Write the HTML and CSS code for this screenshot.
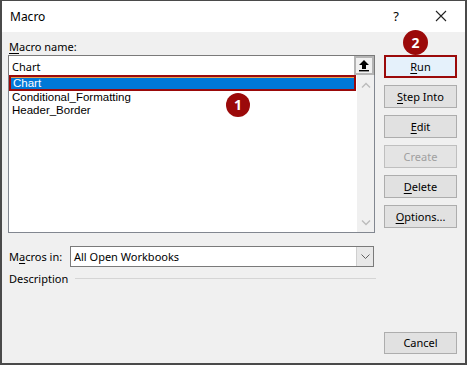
FILE: index.html
```html
<!DOCTYPE html>
<html>
<head>
<meta charset="utf-8">
<link rel="stylesheet" href="styles.css">
</head>
<body>
<div class="dialog">
  <div class="titlebar">
    <span class="title">Macro</span>
    <span class="help">?</span>
    <svg class="close" width="12" height="12" viewBox="0 0 12 12"><path d="M1 1L11 11M11 1L1 11" stroke="#222" stroke-width="1.1" fill="none"/></svg>
  </div>
  <div class="content">
    <div class="left">
      <div class="label"><u>M</u>acro name:</div>
      <div class="namebox">
        <span class="nametext">Chart</span>
        <span class="upbtn">
          <svg width="12" height="13" viewBox="0 0 12 13"><path d="M6 1L11 6H8V10H4V6H1Z" fill="#000"/><rect x="1" y="11" width="10" height="1.4" fill="#000"/></svg>
        </span>
      </div>
      <div class="list">
        <div class="items">
          <div class="item selected">Chart</div>
          <div class="item">Conditional_Formatting</div>
          <div class="item">Header_Border</div>
        </div>
        <div class="scrollbar">
          <svg width="10" height="6" viewBox="0 0 10 6"><path d="M1 5.5L5 1.5L9 5.5" stroke="#bcbcbc" stroke-width="1.4" fill="none"/></svg>
          <svg width="10" height="6" viewBox="0 0 10 6"><path d="M1 0.5L5 4.5L9 0.5" stroke="#bcbcbc" stroke-width="1.4" fill="none"/></svg>
        </div>
        <span class="badge b1">1</span>
      </div>
      <div class="inrow">
        <span class="inlabel">M<u>a</u>cros in:</span>
        <div class="select">
          <span class="seltext">All Open Workbooks</span>
          <span class="selbtn"><svg width="9" height="5" viewBox="0 0 9 5"><path d="M0.5 0.5L4.5 4.5L8.5 0.5" stroke="#606060" stroke-width="1" fill="none"/></svg></span>
        </div>
      </div>
      <div class="descrow">
        <span>Description</span>
        <span class="rule"></span>
      </div>
    </div>
    <div class="right">
      <div class="btn run"><span><u>R</u>un</span><span class="badge b2">2</span></div>
      <div class="btn"><span><u>S</u>tep Into</span></div>
      <div class="btn"><span><u>E</u>dit</span></div>
      <div class="btn disabled"><span>Create</span></div>
      <div class="btn"><span><u>D</u>elete</span></div>
      <div class="btn"><span><u>O</u>ptions...</span></div>
      <div class="btn cancel"><span>Cancel</span></div>
    </div>
  </div>
</div>
</body>
</html>
```

FILE: styles.css
```css
* { box-sizing: border-box; }
html, body { margin: 0; padding: 0; background: #f0f0f0; }
body {
  width: 467px;
  height: 365px;
  font-family: "Noto Sans", "Open Sans", sans-serif;
  font-size: 11px;
  color: #000;
}
u { text-decoration: underline; text-underline-offset: 2px; text-decoration-thickness: 1px; }
.dialog {
  width: 467px;
  height: 365px;
  border: 2px solid #4a4a4a;
  border-top-width: 1px;
  background: #f0f0f0;
  display: flex;
  flex-direction: column;
}
.titlebar {
  height: 31px;
  background: #fff;
  display: flex;
  align-items: center;
  padding: 0 0 0 8px;
  flex: none;
}
.title { font-size: 12px; flex: 1; padding-bottom: 1px; }
.help { font-size: 13px; margin-right: 36px; padding-bottom: 2px; }
.close { margin-right: 18px; margin-bottom: 1px; }
.content {
  flex: 1;
  display: flex;
  padding: 7px 0 9px 6px;
}
.left { width: 368px; display: flex; flex-direction: column; }
.label { height: 16px; line-height: 15px; padding-left: 1px; }
.namebox {
  height: 20px;
  border: 1px solid #7a7a7a;
  border-bottom: none;
  background: #fff;
  display: flex;
  align-items: center;
  margin-right: 1px;
}
.nametext { flex: 1; padding-left: 3px; padding-top: 1px; }
.upbtn {
  width: 20px;
  height: 19px;
  align-self: flex-start;
  border: 2px solid #b4b4b4;
  background: #f0f0f0;
  display: flex;
  align-items: center;
  justify-content: center;
}
.list {
  position: relative;
  height: 158px;
  border: 1px solid #828790;
  border-top: none;
  background: #fff;
  display: flex;
  margin-right: 1px;
}
.items { flex: 1; }
.item {
  height: 13px;
  line-height: 13px;
  padding-left: 3px;
  margin: 0 1px 0 0;
  font-family: "Liberation Sans", Arial, sans-serif;
  font-size: 11.5px;
}
.item.selected {
  height: 16px;
  line-height: 12px;
  background: #0078d7;
  color: #fff;
  border: 2px solid #9b0a0a;
  box-shadow: inset 0 1px 0 0 #e8a050;
  padding-left: 2px;
}
.scrollbar {
  width: 17px;
  background: #f0f0f0;
  display: flex;
  flex-direction: column;
  justify-content: space-between;
  align-items: center;
  padding: 7px 0 6px;
}
.badge {
  position: absolute;
  width: 24px;
  height: 24px;
  border-radius: 50%;
  background: #9b0a0a;
  color: #fff;
  font-weight: bold;
  font-size: 14px;
  line-height: 24px;
  text-align: center;
}
.b1 { left: 217px; top: 18px; }
.b2 { left: 17px; top: -27px; width: 25px; height: 25px; line-height: 25px; }
.inrow { display: flex; align-items: center; margin-top: 13px; height: 21px; }
.inlabel { width: 62px; padding-left: 1px; }
.select {
  width: 304px;
  height: 21px;
  border: 1px solid #7a7a7a;
  background: #fff;
  display: flex;
  align-items: center;
}
.seltext { flex: 1; padding-left: 3px; }
.selbtn {
  width: 17px;
  height: 19px;
  background: #e8e8e8;
  border-left: 1px solid #cfcfcf;
  display: flex;
  align-items: center;
  justify-content: center;
}
.descrow { display: flex; align-items: center; margin-top: 3px; height: 16px; padding-left: 1px; }
.rule { flex: 1; height: 1px; background: #d5d5d5; margin-left: 7px; }
.right {
  width: 73px;
  margin-left: 8px;
  display: flex;
  flex-direction: column;
  gap: 7px;
  padding-top: 16px;
}
.btn {
  position: relative;
  height: 23px;
  border: 1px solid #adadad;
  background: #e1e1e1;
  display: flex;
  align-items: center;
  justify-content: center;
  padding-bottom: 1px;
}
.btn.run { background: #e5f1fb; border: 2px solid #9b0a0a; }
.btn.disabled { color: #a0a0a0; border-color: #bfbfbf; background: #e4e4e4; }
.btn.cancel { margin-top: auto; height: 22px; }
```
